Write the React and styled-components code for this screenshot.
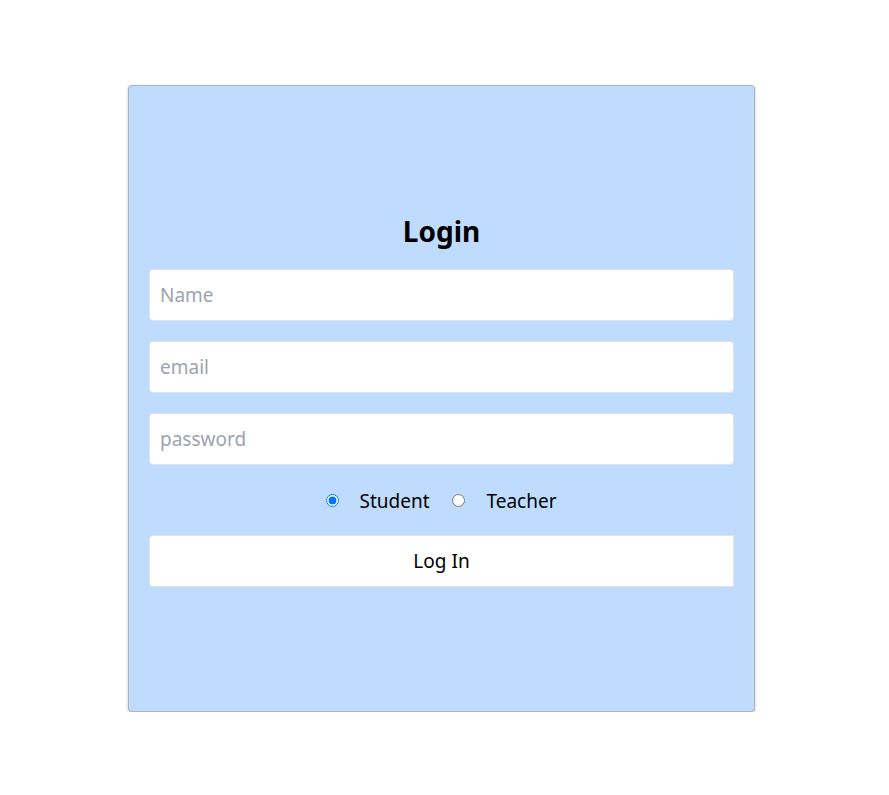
import React, { useState } from 'react';
import styled, { createGlobalStyle } from 'styled-components';

const GlobalStyle = createGlobalStyle`
  body {
    margin: 0;
    font-family: "Noto Sans", "Open Sans", sans-serif;
    background: #ffffff;
  }
`;

const Page = styled.div`
  display: flex;
  justify-content: center;
  padding: 85px 6px 0 0;
`;

const Card = styled.form`
  width: 627px;
  height: 627px;
  box-sizing: border-box;
  display: flex;
  flex-direction: column;
  justify-content: center;
  padding: 2px 20px 0;
  background-color: #bfdbfe;
  border: 1px solid #aeb4bb;
  border-radius: 4px;
  box-shadow: 0 1px 3px rgba(0, 0, 0, 0.25);
`;

const Title = styled.h2`
  margin: 0 0 20px;
  text-align: center;
  font-size: 28px;
  font-weight: 700;
  color: #000;
  line-height: 36px;
`;

const Input = styled.input`
  height: 52px;
  box-sizing: border-box;
  margin-bottom: 20px;
  padding: 0 10px;
  border: 1px solid #dde3ea;
  border-radius: 4px;
  background: #fff;
  font-family: inherit;
  font-size: 19px;
  color: #222;
  outline: none;

  &::placeholder {
    color: #9ca3af;
  }
`;

const RadioRow = styled.div`
  display: flex;
  justify-content: center;
  align-items: center;
  gap: 22px;
  margin-bottom: 20px;
  height: 30px;
  padding-top: 2px;
  box-sizing: border-box;
`;

const RadioLabel = styled.label`
  display: flex;
  align-items: center;
  gap: ${(p) => (p.$first ? '20px' : '22px')};
  font-size: 19px;
  color: #000;
  cursor: pointer;

  input {
    width: 13px;
    height: 13px;
    margin: 0;
  }
`;

const Button = styled.button`
  height: 52px;
  border: 1px solid #dde3ea;
  border-radius: 4px 0 0 4px;
  background: #fff;
  font-family: inherit;
  font-size: 19px;
  color: #000;
  cursor: pointer;
`;

export default function App() {
  const [role, setRole] = useState('student');

  return (
    <>
      <GlobalStyle />
      <Page>
        <Card onSubmit={(e) => e.preventDefault()}>
          <Title>Login</Title>
          <Input type="text" placeholder="Name" />
          <Input type="email" placeholder="email" />
          <Input type="password" placeholder="password" />
          <RadioRow>
            <RadioLabel $first>
              <input
                type="radio"
                name="role"
                checked={role === 'student'}
                onChange={() => setRole('student')}
              />
              Student
            </RadioLabel>
            <RadioLabel>
              <input
                type="radio"
                name="role"
                checked={role === 'teacher'}
                onChange={() => setRole('teacher')}
              />
              Teacher
            </RadioLabel>
          </RadioRow>
          <Button type="submit">Log In</Button>
        </Card>
      </Page>
    </>
  );
}
